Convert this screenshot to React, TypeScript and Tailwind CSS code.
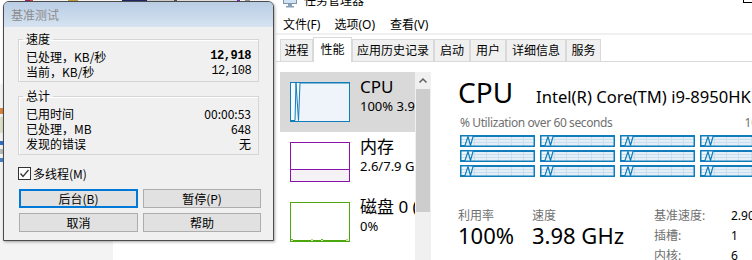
import React from "react";

function CoreGraph() {
  return (
    <svg width="75" height="12" viewBox="0 0 75 12" className="block">
      <rect x="0" y="0" width="75" height="12" fill="#f1f6fa" />
      <polygon points="1,11 5,11 8,1.5 10.5,11 13,1.5 74,1.5 74,11" fill="#e4eff8" />
      {[4.5, 7.5].map((y) => (
        <line key={y} x1="1" x2="74" y1={y} y2={y} stroke="#c9dfef" strokeWidth="1" />
      ))}
      {[14.5, 26.5, 38.5, 51.5, 63.5].map((x) => (
        <line key={x} x1={x} x2={x} y1="1" y2="11" stroke="#c9dfef" strokeWidth="1" />
      ))}
      <polyline points="1,10.5 5,10.5 8,1.5 10.5,10.5 13,1.5 74,1.5" fill="none" stroke="#117dbb" strokeWidth="1.2" />
      <rect x="0.75" y="0.75" width="73.5" height="10.5" fill="none" stroke="#117dbb" strokeWidth="1.5" />
    </svg>
  );
}

function CpuThumb() {
  return (
    <svg width="60" height="40" viewBox="0 0 60 40" className="block">
      <rect x="0" y="0" width="60" height="40" fill="#f7fafc" />
      <polygon points="1,39 5,39 6,1 8.5,39 10,1 59,1 59,39" fill="#eef4f9" />
      <polyline points="1,38.5 5,38.5 6,1 8.5,38.5 10,1 59,1" fill="none" stroke="#117dbb" strokeWidth="1" />
      <rect x="0.5" y="0.5" width="59" height="39" fill="none" stroke="#117dbb" strokeWidth="1" />
    </svg>
  );
}

function MemThumb() {
  return (
    <svg width="60" height="40" viewBox="0 0 60 40" className="block">
      <rect x="0" y="0" width="60" height="40" fill="#ffffff" />
      <rect x="1" y="27" width="58" height="12" fill="#f4f2f4" />
      <line x1="1" x2="59" y1="27.5" y2="27.5" stroke="#8b12ae" strokeWidth="1" />
      <rect x="0.5" y="0.5" width="59" height="39" fill="none" stroke="#8b12ae" strokeWidth="1" />
    </svg>
  );
}

function DiskThumb() {
  return (
    <svg width="60" height="40" viewBox="0 0 60 40" className="block">
      <rect x="0" y="0" width="60" height="40" fill="#ffffff" />
      <polyline points="1,38.5 2,37 3,38.5 21,38.5 22,37.5 23,38.5 31,38.5 32,37 33,38.5 56,38.5 57,37.5 58,38.5" fill="none" stroke="#4da60c" strokeWidth="1" />
      <rect x="0.5" y="0.5" width="59" height="39" fill="none" stroke="#4da60c" strokeWidth="1" />
    </svg>
  );
}

function SideItem({
  selected,
  thumb,
  title,
  sub,
}: {
  selected?: boolean;
  thumb: React.ReactNode;
  title: string;
  sub: string;
}) {
  return (
    <div className={selected ? "h-[60px] flex overflow-hidden bg-[#d9d9d9]" : "h-[60px] flex overflow-hidden"}>
      <div className="ml-[10px] mt-[10px] w-[60px] h-[40px] shrink-0">{thumb}</div>
      <div className="ml-[10px] pt-[4px] whitespace-nowrap text-black">
        <div className="text-[17px] leading-[22px]">{title}</div>
        <div className="text-[13px] leading-[16px]">{sub}</div>
      </div>
    </div>
  );
}

function TaskManager() {
  const tabs: { label: string; w: string; sel?: boolean }[] = [
    { label: "进程", w: "w-[33px]" },
    { label: "性能", w: "w-[39px]", sel: true },
    { label: "应用历史记录", w: "w-[82px]" },
    { label: "启动", w: "w-[36px]" },
    { label: "用户", w: "w-[36px]" },
    { label: "详细信息", w: "w-[60px]" },
    { label: "服务", w: "w-[35px]" },
  ];
  return (
    <div className="absolute left-[276px] top-[-12px] w-[520px] h-[300px] bg-white flex flex-col font-['Noto_Sans','Noto_Sans_CJK_SC',sans-serif] text-black">
      {/* title bar */}
      <div className="h-[20px] pt-[5px] flex items-center">
        <svg width="14" height="14" viewBox="0 0 14 14" className="ml-[7px] shrink-0">
          <rect x="0.5" y="0.5" width="13" height="9" fill="#cfe3f4" stroke="#7f95ad" />
          <rect x="5" y="10" width="4" height="2" fill="#8aa0b6" />
          <rect x="3" y="12" width="8" height="1.5" fill="#8aa0b6" />
        </svg>
        <span className="ml-[7px] text-[12px] leading-[15px]">任务管理器</span>
      </div>
      {/* menu bar */}
      <div className="h-[25px] pt-[9px] pl-[7px] flex text-[12px] leading-[16px]">
        <span>文件(F)</span>
        <span className="ml-[14px]">选项(O)</span>
        <span className="ml-[15px]">查看(V)</span>
      </div>
      <div className="h-[2px] bg-[#f0f0f0] shrink-0" />
      <div className="h-[2px] shrink-0" />
      {/* tabs */}
      <div className="h-[25px] shrink-0 flex items-end pl-[4px] border-b border-[#d9d9d9] text-[12px]">
        {tabs.map((t) =>
          t.sel ? (
            <div
              key={t.label}
              className={`${t.w} h-[25px] mb-[-1px] bg-white border border-b-0 border-[#d9d9d9] flex items-center justify-center`}
            >
              {t.label}
            </div>
          ) : (
            <div
              key={t.label}
              className={`${t.w} h-[22px] bg-[#f0f0f0] border border-b-0 border-[#d9d9d9] flex items-center justify-center`}
            >
              {t.label}
            </div>
          )
        )}
      </div>
      {/* content */}
      <div className="flex flex-1">
        {/* sidebar */}
        <div className="pt-[10px] pl-[4px] flex">
          <div className="w-[135px] flex flex-col">
            <SideItem selected thumb={<CpuThumb />} title="CPU" sub="100%  3.98 GHz" />
            <SideItem thumb={<MemThumb />} title="内存" sub="2.6/7.9 GB (33%)" />
            <SideItem thumb={<DiskThumb />} title="磁盘 0 (C:)" sub="0%" />
          </div>
          <div className="w-[16px] bg-[#f0f0f0] flex flex-col">
            <svg width="16" height="17" viewBox="0 0 16 17" className="block">
              <polyline points="4.5,10.5 8,7 11.5,10.5" fill="none" stroke="#606060" strokeWidth="1.5" />
            </svg>
            <div className="ml-[1px] w-[14px] h-[123px] bg-[#cdcdcd]" />
          </div>
        </div>
        {/* main */}
        <div className="flex-1 pl-[27px] pt-[13px]">
          <div className="flex items-baseline">
            <span className="text-[28px] leading-[34px]">CPU</span>
            <span className="ml-[23px] text-[16.6px] leading-[22px] whitespace-nowrap">Intel(R) Core(TM) i9-8950HK CPU @ 2.90GHz</span>
          </div>
          <div className="mt-[6px] ml-[2px] w-[315px] flex justify-between text-[12px] leading-[16px] text-[#707070]">
            <span className="tracking-[-0.4px]">% Utilization over 60 seconds</span>
            <span>100%</span>
          </div>
          <div className="mt-[4px] ml-[2px] w-[315px] grid grid-cols-4 gap-x-[5px] gap-y-[3px]">
            {Array.from({ length: 12 }).map((_, i) => (
              <CoreGraph key={i} />
            ))}
          </div>
          <div className="mt-[29px] flex">
            <div className="w-[74px]">
              <div className="text-[12px] leading-[20px] text-[#707070]">利用率</div>
              <div className="text-[22px] leading-[19px]">100%</div>
            </div>
            <div className="w-[122px]">
              <div className="text-[12px] leading-[20px] text-[#707070]">速度</div>
              <div className="text-[22px] leading-[19px] whitespace-nowrap">3.98 GHz</div>
            </div>
            <div className="grid grid-cols-[77px_80px] text-[12px] leading-[20px]">
              <span className="text-[#707070]">基准速度:</span>
              <span>2.90 GHz</span>
              <span className="text-[#707070]">插槽:</span>
              <span>1</span>
              <span className="text-[#707070]">内核:</span>
              <span>6</span>
            </div>
          </div>
        </div>
      </div>
    </div>
  );
}

function Row({ label, value, mono, bold }: { label: string; value: string; mono?: boolean; bold?: boolean }) {
  return (
    <div className="flex justify-between items-center h-[15px] leading-[15px]">
      <span>{label}</span>
      <span
        className={
          mono
            ? bold
              ? "font-['Liberation_Mono',monospace] text-[12px] tracking-[-0.4px] font-bold"
              : "font-['Liberation_Mono',monospace] text-[12px] tracking-[-0.6px]"
            : ""
        }
      >
        {value}
      </span>
    </div>
  );
}

function BenchDialog() {
  return (
    <div className="absolute left-[3px] top-[1px] w-[271px] h-[240px] rounded-t-[6px] border border-[#4b4b4b] bg-[#f0f0f0] flex flex-col overflow-hidden shadow-[1px_1px_3px_rgba(0,0,0,0.35)] font-['Noto_Sans_CJK_SC',sans-serif] text-[12px] text-black">
      <div className="h-[25px] shrink-0 bg-gradient-to-b from-[#b9cde4] to-[#d6e3f1] flex items-center pl-[7px] text-[#8c8c8c]">
        基准测试
      </div>
      <div className="flex-1 px-[14px] flex flex-col">
        <fieldset className="mt-[4px] border border-[#d5d5d5] px-[7px] pb-[2px] shadow-[inset_1px_1px_0_#ffffff]">
          <legend className="ml-[-3px] px-[3px] leading-[16px]">速度</legend>
          <div className="pt-[2px]">
            <Row label="已处理，KB/秒" value="12,918" mono bold />
            <Row label="当前，KB/秒" value="12,108" mono />
          </div>
        </fieldset>
        <fieldset className="mt-[6px] border border-[#d5d5d5] px-[7px] pb-[3px] shadow-[inset_1px_1px_0_#ffffff]">
          <legend className="ml-[-3px] px-[3px] leading-[16px]">总计</legend>
          <div className="pt-[2px]">
            <Row label="已用时间" value="00:00:53" />
            <Row label="已处理，MB" value="648" />
            <Row label="发现的错误" value="无" />
          </div>
        </fieldset>
        <div className="mt-[12px] flex items-center h-[13px]">
          <div className="w-[13px] h-[13px] border border-[#333333] bg-white flex items-center justify-center shrink-0">
            <svg width="11" height="11" viewBox="0 0 11 11">
              <polyline points="1.5,5.5 4,8.5 9.5,2" fill="none" stroke="#3c3c3c" strokeWidth="1.4" />
            </svg>
          </div>
          <span className="ml-[2px] leading-[15px]">多线程(M)</span>
        </div>
        <div className="mt-[9px] ml-[1px] w-[242px] grid grid-cols-[119px_118px] gap-x-[5px] gap-y-[5px]">
          <div className="h-[19px] border-2 border-[#0078d7] bg-[#e1e1e1] flex items-center justify-center">后台(B)</div>
          <div className="h-[19px] border border-[#adadad] bg-[#e1e1e1] flex items-center justify-center">暂停(P)</div>
          <div className="h-[19px] border border-[#adadad] bg-[#e1e1e1] flex items-center justify-center">取消</div>
          <div className="h-[19px] border border-[#adadad] bg-[#e1e1e1] flex items-center justify-center">帮助</div>
        </div>
      </div>
    </div>
  );
}

export default function App() {
  return (
    <div className="relative w-[752px] h-[260px] overflow-hidden bg-white">
      {/* background windows peeking out */}
      <div className="absolute left-0 top-0 w-[260px] h-[4px] flex">
        <div className="w-[25px] bg-white" />
        <div className="w-[5px] bg-[#a3206f]" />
        <div className="w-[3px] bg-[#d05030]" />
        <div className="w-[35px] bg-white" />
        <div className="w-[10px] bg-[#c9a23c]" />
        <div className="w-[44px] bg-white" />
        <div className="w-[25px] bg-[#1f2a6b]" />
        <div className="w-[27px] bg-[#d4d4d4]" />
        <div className="w-[3px] bg-[#555555]" />
        <div className="w-[60px] bg-[#e8e8e8]" />
        <div className="w-[3px] bg-[#7a2bbf]" />
        <div className="w-[5px] bg-white" />
        <div className="w-[5px] bg-[#9a9a9a]" />
      </div>
      <div className="absolute left-0 top-[84px] w-[113px] h-[180px] bg-[#f3f3f3] flex flex-col">
        <div className="mt-[24px] h-[6px] w-[4px] bg-[#d9823a]" />
        <div className="mt-[3px] h-[16px] w-[4px] bg-[#dcdfc6]" />
        <div className="mt-[8px] h-[4px] w-[4px] bg-[#2d6fd0]" />
        <div className="mt-[4px] h-[5px] w-[4px] bg-[#b8b8b8]" />
        <div className="mt-[4px] h-[4px] w-[4px] bg-[#4a7fc8]" />
      </div>
      <TaskManager />
      <div className="absolute left-[743px] top-[-7px] w-[12px] h-[10px] border border-black" />
      <BenchDialog />
    </div>
  );
}
